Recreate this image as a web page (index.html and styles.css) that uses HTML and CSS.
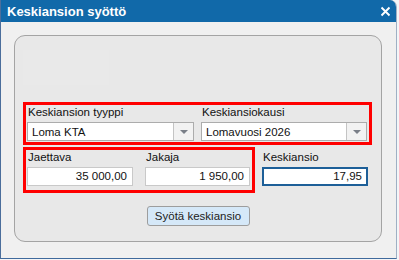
FILE: index.html
```html
<!DOCTYPE html>
<html>
<head>
<meta charset="utf-8">
<link rel="stylesheet" href="styles.css">
</head>
<body>
<div class="window">
  <div class="titlebar">
    <span class="title">Keskiansion syöttö</span>
    <svg class="close" width="11" height="11" viewBox="0 0 11 11"><path d="M1.5 1.5 L9.5 9.5 M9.5 1.5 L1.5 9.5" stroke="#fff" stroke-width="1.9" fill="none"/></svg>
  </div>
  <div class="body">
    <div class="panel">
      <div class="ghost"></div>
      <div class="box box1">
        <div class="field">
          <label class="lbl">Keskiansion tyyppi</label>
          <div class="combo"><span class="val">Loma KTA</span><span class="btn"><i class="arrow"></i></span></div>
        </div>
        <div class="field">
          <label class="lbl">Keskiansiokausi</label>
          <div class="combo"><span class="val">Lomavuosi 2026</span><span class="btn"><i class="arrow"></i></span></div>
        </div>
      </div>
      <div class="row2">
        <div class="box box2">
          <div class="field">
            <label class="lbl">Jaettava</label>
            <div class="input">35 000,00</div>
          </div>
          <div class="field">
            <label class="lbl">Jakaja</label>
            <div class="input">1 950,00</div>
          </div>
        </div>
        <div class="field result">
          <label class="lbl">Keskiansio</label>
          <div class="input focus">17,95</div>
        </div>
      </div>
      <div class="actions">
        <button class="submit">Syötä keskiansio</button>
      </div>
    </div>
  </div>
</div>
</body>
</html>
```
FILE: styles.css
```css
html, body {
  margin: 0;
  padding: 0;
}
body {
  width: 399px;
  height: 260px;
  background: #f4f5f7;
  font-family: "Liberation Sans", Arial, sans-serif;
  color: #111;
  overflow: hidden;
}
.window {
  width: 397px;
  height: 259px;
  box-sizing: border-box;
  border-left: 1px solid #4b6e9c;
  border-right: 1px solid #9fb0c4;
  border-bottom: 1px solid #3f6a9c;
  border-top-right-radius: 7px;
  background: #f0f0f0;
  display: flex;
  flex-direction: column;
  overflow: hidden;
}
.titlebar {
  height: 22px;
  flex: none;
  background: #1169a9;
  color: #fff;
  display: flex;
  align-items: center;
  justify-content: space-between;
  padding: 0 5px 0 6px;
}
.title {
  font-weight: bold;
  font-size: 13px;
}
.close {
  display: block;
  margin-top: 1px;
}
.body {
  flex: 1;
  padding: 13px 0 0 13px;
}
.panel {
  width: 368px;
  height: 207px;
  box-sizing: border-box;
  border: 1px solid #a4a4a4;
  border-radius: 11px;
  background: #e8e8e8;
  padding: 14px 0 0 8px;
}
.ghost {
  width: 86px;
  height: 35px;
  background: #e9e9e9;
  margin-bottom: 17px;
}
.box {
  box-sizing: border-box;
  border: 3px solid #ff0000;
}
.box1 {
  width: 349px;
  height: 43px;
  padding: 0 2px 1px 1px;
  display: grid;
  grid-template-columns: 167px 166px;
  column-gap: 7px;
}
.field {
  display: flex;
  flex-direction: column;
}
.lbl {
  font-size: 11.5px;
  line-height: 15px;
  height: 15px;
  margin-bottom: 2px;
  padding-left: 1px;
  white-space: nowrap;
}
.combo {
  height: 19px;
  box-sizing: border-box;
  border: 1px solid #acacac;
  background: #fff;
  display: flex;
  align-items: center;
}
.val {
  flex: 1;
  font-size: 11.5px;
  padding-left: 4px;
}
.btn {
  width: 19px;
  height: 17px;
  border-left: 1px solid #c4c4c4;
  background: #f2f2f2;
  display: flex;
  align-items: center;
  justify-content: center;
}
.arrow {
  width: 0;
  height: 0;
  border-left: 4px solid transparent;
  border-right: 4px solid transparent;
  border-top: 4px solid #7a7f88;
}
.row2 {
  display: flex;
  align-items: flex-start;
  margin-top: 2px;
}
.box2 {
  width: 232px;
  height: 46px;
  padding: 0 2px 0 1px;
  display: grid;
  grid-template-columns: 106px 105px;
  column-gap: 12px;
}
.result {
  width: 106px;
  margin-left: 7px;
  padding-top: 3px;
}
.input {
  height: 19px;
  box-sizing: border-box;
  border: 1px solid #c9c9c9;
  background: #fff;
  font-size: 11.5px;
  line-height: 17px;
  text-align: right;
  padding-right: 5px;
}
.focus {
  border: 2px solid #1d5f98;
  line-height: 15px;
  padding-right: 4px;
}
.actions {
  width: 349px;
  display: flex;
  justify-content: center;
  margin-top: 13px;
}
.submit {
  width: 103px;
  height: 20px;
  box-sizing: border-box;
  border: 1px solid #9d9d9d;
  border-radius: 3px;
  background: #d5e8f8;
  font-family: "Liberation Sans", Arial, sans-serif;
  font-size: 11.5px;
  color: #222;
  padding: 0;
  margin-left: 1px;
}
```
